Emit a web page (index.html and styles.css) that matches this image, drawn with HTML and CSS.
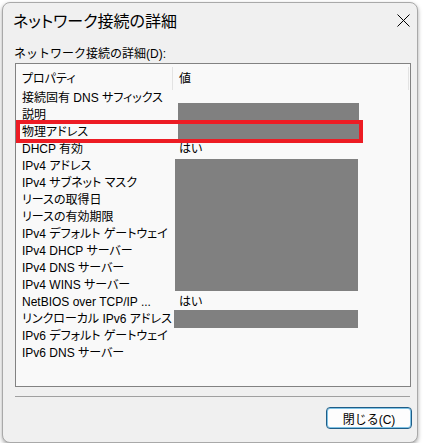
FILE: index.html
```html
<!DOCTYPE html>
<html lang="ja">
<head>
<meta charset="utf-8">
<title>ネットワーク接続の詳細</title>
<link rel="stylesheet" href="styles.css">
</head>
<body>
<div class="window">
  <div class="titlebar">
    <span class="title">ネットワーク接続の詳細</span>
    <svg class="close" width="13" height="13" viewBox="0 0 13 13"><path d="M0.5 0.5 L12.5 12.5 M12.5 0.5 L0.5 12.5" stroke="#000" stroke-width="1" fill="none"/></svg>
  </div>
  <div class="label">ネットワーク接続の詳細(D):</div>
  <div class="list">
    <div class="header">
      <div class="hcell c1">プロパティ</div>
      <div class="hsep"></div>
      <div class="hcell c2">値</div>
      <div class="hsep end"></div>
    </div>
    <div class="rows">
      <div class="row"><span class="c1">接続固有 DNS サフィックス</span><span class="c2"></span></div>
      <div class="row"><span class="c1">説明</span><span class="c2"></span></div>
      <div class="row"><span class="c1">物理アドレス</span><span class="c2"></span></div>
      <div class="row"><span class="c1">DHCP 有効</span><span class="c2">はい</span></div>
      <div class="row"><span class="c1">IPv4 アドレス</span><span class="c2"></span></div>
      <div class="row"><span class="c1">IPv4 サブネット マスク</span><span class="c2"></span></div>
      <div class="row"><span class="c1">リースの取得日</span><span class="c2"></span></div>
      <div class="row"><span class="c1">リースの有効期限</span><span class="c2"></span></div>
      <div class="row"><span class="c1">IPv4 デフォルト ゲートウェイ</span><span class="c2"></span></div>
      <div class="row"><span class="c1">IPv4 DHCP サーバー</span><span class="c2"></span></div>
      <div class="row"><span class="c1">IPv4 DNS サーバー</span><span class="c2"></span></div>
      <div class="row"><span class="c1">IPv4 WINS サーバー</span><span class="c2"></span></div>
      <div class="row"><span class="c1">NetBIOS over TCP/IP ...</span><span class="c2">はい</span></div>
      <div class="row"><span class="c1">リンクローカル IPv6 アドレス</span><span class="c2"></span></div>
      <div class="row"><span class="c1">IPv6 デフォルト ゲートウェイ</span><span class="c2"></span></div>
      <div class="row"><span class="c1">IPv6 DNS サーバー</span><span class="c2"></span></div>
    </div>
    <div class="redact r1"></div>
    <div class="redact r2"></div>
    <div class="redact r3"></div>
    <div class="highlight"></div>
  </div>
  <div class="divider"></div>
  <div class="footer">
    <button class="btn">閉じる(C)</button>
  </div>
</div>
</body>
</html>
```

FILE: styles.css
```css
html, body {
  margin: 0;
  padding: 0;
  background: #ffffff;
}
body {
  font-family: "Liberation Sans", "Noto Sans CJK JP", sans-serif;
  font-size: 12px;
  color: #000;
}
.window {
  box-sizing: border-box;
  margin: 2px 0 0 2px;
  width: 416px;
  height: 441px;
  background: #f0f0f0;
  border: 1px solid #a9a9a9;
  border-radius: 8px;
  box-shadow: 0 2px 4px rgba(0,0,0,0.35);
  display: flex;
  flex-direction: column;
}
.titlebar {
  height: 34px;
  display: flex;
  align-items: center;
  justify-content: space-between;
  padding: 0 7px 0 10px;
}
.title {
  font-family: "Noto Sans CJK JP", sans-serif;
  font-size: 16px;
  font-feature-settings: "palt" 1;
  line-height: 20px;
}
.close {
  display: block;
}
.label {
  margin: 9px 0 0 11px;
  line-height: 16px;
  height: 16px;
  font-family: "Liberation Sans", "Noto Sans CJK JP", sans-serif;
}
.list {
  position: relative;
  box-sizing: border-box;
  margin: 1px 0 0 12px;
  width: 396px;
  height: 324px;
  background: #f9f9f9;
  border: 1px solid #828282;
}
.header {
  display: flex;
  height: 26px;
  align-items: stretch;
}
.hcell {
  display: flex;
  align-items: center;
}
.hsep {
  width: 1px;
  background: #e3e3e3;
  margin-top: 3px;
}
.header .c1 {
  width: 150px;
  padding-left: 6px;
  font-feature-settings: "palt" 1;
}
.header .c2 {
  width: 229px;
  padding-left: 6px;
}
.rows {
  display: flex;
  flex-direction: column;
}
.row {
  display: flex;
  height: 17px;
  line-height: 17px;
  white-space: nowrap;
  font-feature-settings: "palt" 1;
}
.row .c1 {
  width: 151px;
  padding-left: 6px;
  overflow: hidden;
}
.row .c2 {
  padding-left: 6px;
}
.redact {
  position: absolute;
  background: #808080;
}
.r1 { left: 162px; top: 39px; width: 181px; height: 37px; }
.r2 { left: 159px; top: 95px; width: 183px; height: 132px; }
.r3 { left: 158px; top: 246px; width: 184px; height: 18px; }
.highlight {
  position: absolute;
  box-sizing: border-box;
  left: 0;
  top: 56px;
  width: 347px;
  height: 23px;
  border: 4px solid #ed1c24;
}
.divider {
  margin: 9px 0 0 12px;
  width: 395px;
  height: 1px;
  background: #a0a0a0;
}
.footer {
  display: flex;
  justify-content: flex-end;
  padding: 10px 5px 0 0;
}
.btn {
  box-sizing: border-box;
  width: 86px;
  height: 22px;
  font-family: "Liberation Sans", "Noto Sans CJK JP", sans-serif;
  font-size: 12px;
  color: #000;
  background: #fdfdfd;
  border: 1px solid #1f5d87;
  box-shadow: inset 0 0 0 1px #7fc3e6;
  border-radius: 4px;
  padding: 0;
}
```
